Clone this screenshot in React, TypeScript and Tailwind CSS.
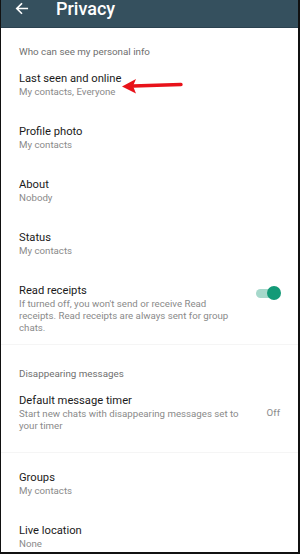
import React from "react";

type Item = { title: string; sub: string[]; right?: React.ReactNode };

function Row(props: Item & { arrow?: boolean }) {
  const { title, sub, right, arrow } = props;
  return (
    <div className="relative flex items-start pl-[18px] pr-[18px] h-[53px]">
      <div className="flex-1 pt-[1px]">
        <div className="text-[11.2px] leading-[15px] text-[#1b1b1b]">{title}</div>
        {sub.map((s) => (
          <div key={s} className="text-[9.7px] leading-[12px] text-[#8a8a8a]">
            {s}
          </div>
        ))}
      </div>
      {right}
      {arrow && (
        <svg
          className="absolute left-[120px] top-[8px]"
          width="62"
          height="16"
          viewBox="0 0 62 16"
        >
          <path d="M12 8 L60 6.5" stroke="#e8121a" strokeWidth="3.4" strokeLinecap="round" />
          <path d="M1 8.5 L15 1 L12 8 L15 15.5 Z" fill="#e8121a" />
        </svg>
      )}
    </div>
  );
}

function Section(props: { label: string; className: string }) {
  return (
    <div className={"pl-[18px] text-[9.8px] leading-[14px] text-[#6f6f6f] " + props.className}>
      {props.label}
    </div>
  );
}

export default function App() {
  return (
    <div
      className="w-[300px] h-[554px] overflow-hidden bg-white border-l border-r-2 border-b-2 border-[#111]"
      style={{ fontFamily: "Roboto, 'Noto Sans', sans-serif" }}
    >
      <div className="h-[28px] bg-[#35505e] border-b border-[#2b4250] flex items-start">
        <svg className="ml-[14px] mt-[2px]" width="14" height="13" viewBox="0 0 24 22" fill="none">
          <path d="M21 11H4M11 3l-8 8 8 8" stroke="#fff" strokeWidth="2.8" strokeLinecap="square" />
        </svg>
        <div className="ml-[27px] text-[18px] font-medium text-white leading-[18px]">Privacy</div>
      </div>
      <Section label="Who can see my personal info" className="pt-[17px] h-[42px]" />
      <Row title="Last seen and online" sub={["My contacts, Everyone"]} arrow />
      <Row title="Profile photo" sub={["My contacts"]} />
      <Row title="About" sub={["Nobody"]} />
      <Row title="Status" sub={["My contacts"]} />
      <div className="flex items-start pl-[18px] pr-[18px] pt-[1px] h-[63px] border-b border-[#f5f5f5]">
        <div className="w-[222px]">
          <div className="text-[11.2px] leading-[15px] text-[#1b1b1b]">Read receipts</div>
          <div className="text-[9.7px] leading-[12px] text-[#8a8a8a]">
            If turned off, you won't send or receive Read receipts. Read receipts are always sent for group chats.
          </div>
        </div>
        <div className="flex-1" />
        <div className="relative w-[26px] h-[14px] mt-[3px] -mr-[1px]">
          <div className="absolute left-[1px] top-[3px] w-[22px] h-[9px] rounded-full bg-[#a6d8cb]" />
          <div className="absolute right-0 top-0 w-[14px] h-[14px] rounded-full bg-[#139a77]" />
        </div>
      </div>
      <Section label="Disappearing messages" className="pt-[22px] h-[47px]" />
      <div className="flex items-start pl-[18px] pr-[18px] pt-[1px] h-[61px] border-b border-[#f5f5f5]">
        <div className="flex-1">
          <div className="text-[11.2px] leading-[15px] text-[#1b1b1b]">Default message timer</div>
          <div className="text-[9.7px] leading-[12px] text-[#8a8a8a] w-[226px]">
            Start new chats with disappearing messages set to your timer
          </div>
        </div>
        <div className="text-[9.7px] leading-[12px] text-[#8a8a8a] mt-[14px]">Off</div>
      </div>
      <div className="h-[16px]" />
      <Row title="Groups" sub={["My contacts"]} />
      <Row title="Live location" sub={["None"]} />
    </div>
  );
}
